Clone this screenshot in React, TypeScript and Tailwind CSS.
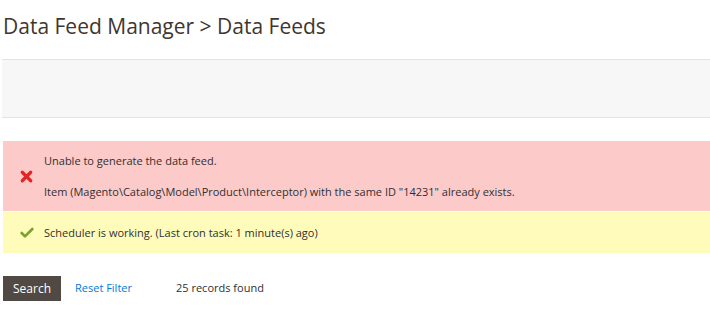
import { Check, X } from "lucide-react";

export default function App() {
  return (
    <div className="h-[315px] w-[710px] overflow-hidden bg-white font-['Open_Sans',sans-serif] text-[#303030]">
      <h1 className="pl-[3px] pt-[12px] text-[21px] font-normal leading-[28px] text-[#41362f]">
        Data Feed Manager &gt; Data Feeds
      </h1>

      <div className="ml-[2px] mt-[19px] h-[59px] border-y border-[#e3e3e3] bg-[#f7f7f7]" />

      <div className="ml-[3px] mt-[23px] flex flex-col">
        <div className="flex h-[70px] items-center bg-[#fdcaca] pt-px text-[11px] text-[#303030]">
          <div className="flex w-[41px] justify-center pl-[6px]">
            <X className="size-[17px] text-[#e22626]" strokeWidth={4.5} />
          </div>
          <div className="flex flex-col gap-[14px]">
            <p>Unable to generate the data feed.</p>
            <p>Item (Magento\Catalog\Model\Product\Interceptor) with the same ID "14231" already exists.</p>
          </div>
        </div>
        <div className="mt-px flex h-[41px] items-center bg-[#fffbbb] pt-px text-[11px] text-[#303030]">
          <div className="flex w-[41px] justify-center pl-[7px]">
            <Check className="size-[16px] text-[#79a22e]" strokeWidth={4} />
          </div>
          <p>Scheduler is working. (Last cron task: 1 minute(s) ago)</p>
        </div>
      </div>

      <div className="ml-[3px] mt-[23px] flex items-center text-[11px]">
        <button className="h-[25px] w-[58px] bg-[#514943] text-[12px] text-white">Search</button>
        <a className="ml-[14px] text-[#007bdb]">Reset Filter</a>
        <span className="ml-[44px] text-[#303030]">25 records found</span>
      </div>
    </div>
  );
}
